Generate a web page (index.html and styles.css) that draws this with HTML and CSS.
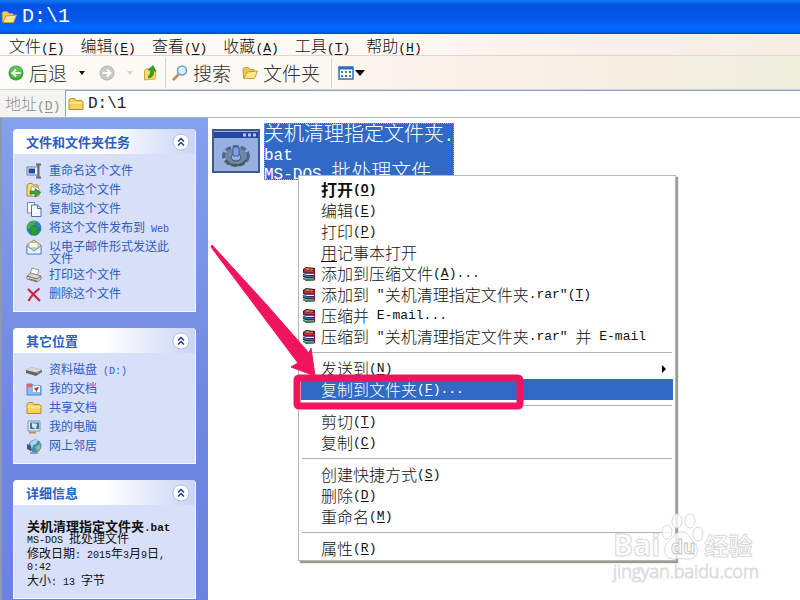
FILE: index.html
```html
<!DOCTYPE html>
<html lang="zh-CN">
<head>
    <meta charset="utf-8"/>
    <meta content="width=device-width, initial-scale=1.0" name="viewport"/>
    <title>D:\1</title>
    <link rel="stylesheet" href="styles.css">
</head>
<body>
    <svg class="symbols" aria-hidden="true">
        <symbol id="rar" viewBox="0 0 14 14">
            <path d="M1 2l3-2 9 1v12l-9 1-3-3z" fill="#222"/>
            <path d="M2 2l3-1 7 1-3 2z" fill="#e09030"/>
            <path d="M2 3l3 1.500h7.500" stroke="#d0284e" stroke-width="2" fill="none"/>
            <path d="M1 6.500l4 1h7.500M1 10.500l4 1.500h7.500" stroke="#eee" stroke-width="1" fill="none"/>
            <path d="M1 5.500l4 1h7.500" stroke="#7a3c90" stroke-width="1" fill="none"/>
            <path d="M1 8l4 1.500h7.500" stroke="#3a70c0" stroke-width="1.500" fill="none"/>
            <path d="M1 11.500l4 1.500h7.500" stroke="#2d8a48" stroke-width="1.500" fill="none"/>
            <path d="M8 1v3M12.500 2v11" stroke="#8a1038" stroke-width="1"/>
        </symbol>
        <symbol id="folder" viewBox="0 0 16 16">
            <path d="M1 13.500V4l1.500-1.500h4L8 4.500h5.500L15 6v7.500z" fill="#f5d45e" stroke="#b8892a"/>
            <path d="M1.500 7h13" stroke="#fff5b8"/>
        </symbol>
        <symbol id="folder-open" viewBox="0 0 16 16">
            <path d="M1.500 13L1 4l1.500-1.500h4L8 4.500h4V7" fill="#f0cb52" stroke="#c79a33"/>
            <path d="M2 13.500L5 7l10.500-1-3 7.500z" fill="#fde88e" stroke="#c79a33"/>
        </symbol>
        <symbol id="chevrons" viewBox="0 0 18 18">
            <circle cx="9" cy="9" r="8" fill="#fff" stroke="#b4bfe2"/>
            <path d="M6 8.500l3-3 3 3M6 12.500l3-3 3 3" fill="none" stroke="#1c3c80" stroke-width="1.500"/>
        </symbol>
    </svg>

    <div class="window">
        <header class="title-bar">
            <svg class="icon" viewBox="0 0 16 16"><use href="#folder-open"/></svg>
            <h1>D:\1</h1>
        </header>

        <nav class="menu-bar">
            <button type="button">文件<span class="en">(<u>F</u>)</span></button>
            <button type="button">编辑<span class="en">(<u>E</u>)</span></button>
            <button type="button">查看<span class="en">(<u>V</u>)</span></button>
            <button type="button">收藏<span class="en">(<u>A</u>)</span></button>
            <button type="button">工具<span class="en">(<u>T</u>)</span></button>
            <button type="button">帮助<span class="en">(<u>H</u>)</span></button>
        </nav>

        <div class="toolbar">
            <button type="button" class="back">
                <svg class="icon" viewBox="0 0 16 16"><circle cx="8" cy="8" r="7.500" fill="#38a536"/><circle cx="8" cy="7" r="6" fill="#5cc153"/><path d="M12.500 8H5M8 4.500L4.500 8 8 11.500" fill="none" stroke="#fff" stroke-width="2"/></svg>
                后退
            </button>
            <button type="button" class="drop" aria-label="后退历史"><svg viewBox="0 0 6 4"><path d="M0 0h6L3 4z" fill="#111"/></svg></button>
            <button type="button" aria-label="前进">
                <svg class="icon" viewBox="0 0 16 16"><circle cx="8" cy="8" r="7" fill="#c9c9c9" stroke="#b5b5b5"/><path d="M3.500 8H11M8 4.500L11.500 8 8 11.500" fill="none" stroke="#fff" stroke-width="2"/></svg>
            </button>
            <button type="button" class="drop" aria-label="前进历史"><svg viewBox="0 0 6 4"><path d="M0 0h6L3 4z" fill="#d9cfc4"/></svg></button>
            <button type="button" class="up" aria-label="向上">
                <svg class="icon" viewBox="0 0 16 16"><path d="M1.500 15V5.500L3 4h3l1 1.500h6L12 14z" fill="#f8dc6a" stroke="#d0a840"/><path d="M6 13c4-1 5-4 4.500-7H13L10 .5 5 5h2.500c.5 3-.5 5-2.500 7z" fill="#35a02e" stroke="#1c7a1c" stroke-width=".6"/></svg>
            </button>
            <span class="divider"></span>
            <button type="button" class="search">
                <svg class="icon" viewBox="0 0 16 16"><path d="M6.500 9.500L1 15" stroke="#c98352" stroke-width="2.500"/><circle cx="10" cy="5.500" r="4.500" fill="#d8effc" stroke="#6b9fd2" stroke-width="1.500"/><path d="M7.500 5a3 3 0 0 1 3-2.500" stroke="#fff" fill="none"/></svg>
                搜索
            </button>
            <button type="button" class="folders">
                <svg class="icon" viewBox="0 0 16 16"><use href="#folder-open"/></svg>
                文件夹
            </button>
            <span class="divider"></span>
            <button type="button" class="views" aria-label="查看方式">
                <svg class="icon" viewBox="0 0 16 14"><path d="M1 1h14v12H1z" fill="#fff" stroke="#2c70b8" stroke-width="1.500"/><path d="M1 1h14v2.500H1z" fill="#2472c8"/><path d="M3 6h2M3 10h2" stroke="#4a7ab8" stroke-width="2"/><path d="M7 6h2M11 10h2" stroke="#4aa050" stroke-width="2"/><path d="M11 6h2M7 10h2" stroke="#3f5f9c" stroke-width="2"/></svg>
                <svg class="caret" viewBox="0 0 10 6"><path d="M0 0h10L5 6z" fill="#000"/></svg>
            </button>
        </div>

        <div class="address-bar">
            <label for="address">地址<span class="en">(<u>D</u>)</span></label>
            <div class="address-box">
                <svg class="icon" viewBox="0 0 16 16"><use href="#folder"/></svg>
                <input type="text" id="address" value="D:\1"/>
            </div>
        </div>

        <div class="content">
            <aside class="sidebar">
                <section class="panel">
                    <div class="panel-head">
                        <h2>文件和文件夹任务</h2>
                        <button type="button" aria-label="折叠"><svg viewBox="0 0 18 18"><use href="#chevrons"/></svg></button>
                    </div>
                    <ul class="task-list">
                        <li><a href="#">
                            <svg class="icon" viewBox="0 0 16 16"><path d="M1 4h11v8H1z" fill="#f4f4f8" stroke="#777"/><path d="M2.500 5.500H9v5H2.500z" fill="#1c4cb0"/><path d="M10 1.500h5M12.500 2v12M10 14.500h5" stroke="#667" stroke-width="2"/></svg>
                            重命名这个文件</a></li>
                        <li><a href="#">
                            <svg class="icon" viewBox="0 0 16 16"><path d="M1 14V3l2-1.500h3L7.500 3H12v11z" fill="#f5dc78" stroke="#ae8d30"/><path d="M5 5h6l2 2v7H5z" fill="#fff" stroke="#999"/><path d="M4 9h5V6.500l6 4-6 4.500v-3H4z" fill="#3da52c" stroke="#1f7a18" stroke-width=".6"/></svg>
                            移动这个文件</a></li>
                        <li><a href="#">
                            <svg class="icon" viewBox="0 0 16 16"><path d="M1.500 1.500h7V12h-7z" fill="#fff" stroke="#6c88b8"/><path d="M5.500 4h6L15 7.500v8H5.500z" fill="#f6faff" stroke="#4d6ea8"/><path d="M11.500 4v3.500H15" fill="none" stroke="#4d6ea8"/></svg>
                            复制这个文件</a></li>
                        <li><a href="#">
                            <svg class="icon" viewBox="0 0 16 16"><circle cx="8" cy="8" r="7.500" fill="#2c83c4"/><path d="M2 4c3-4 6-3 8-3L8 5 5 6l1 3-3 1-2-3z" fill="#44b04c"/><path d="M8 5l6 5h-3v5H5v-5H2.500z" fill="#2f9e35" stroke="#176e20" stroke-width=".6"/></svg>
                            <span>将这个文件发布到<span class="en"> Web</span></span></a></li>
                        <li class="wrapped"><a href="#">
                            <svg class="icon" viewBox="0 0 16 16"><path d="M1 6l7-5 7 5v9H1z" fill="#c5daf5" stroke="#6c8fc4"/><path d="M3 3.500h9V9H3z" fill="#fffdf5" stroke="#d8a860"/><path d="M1 7l7 5 7-5v8H1z" fill="#e8f2ff" stroke="#6c8fc4"/></svg>
                            <span>以电子邮件形式发送此<br>文件</span></a></li>
                        <li><a href="#">
                            <svg class="icon" viewBox="0 0 16 16"><path d="M4 7l2-6 7 2-2 5z" fill="#fff" stroke="#999"/><path d="M1 9l4-3 10 3v3l-4 3L1 12z" fill="#dcd8cc" stroke="#88857c"/><path d="M3 12l8 2M1 9l10 3 4-3" fill="none" stroke="#6f6c66"/></svg>
                            打印这个文件</a></li>
                        <li><a href="#">
                            <svg class="icon" viewBox="0 0 16 16"><path d="M2 3l12 12M13.500 2.500C9 6 5 10 2.500 15" fill="none" stroke="#cf2142" stroke-width="2.200"/></svg>
                            删除这个文件</a></li>
                    </ul>
                </section>

                <section class="panel">
                    <div class="panel-head">
                        <h2>其它位置</h2>
                        <button type="button" aria-label="折叠"><svg viewBox="0 0 18 18"><use href="#chevrons"/></svg></button>
                    </div>
                    <ul class="task-list">
                        <li><a href="#">
                            <svg class="icon" viewBox="0 0 16 16"><path d="M0 8l6-3 10 3v2l-6 4L0 11z" fill="#666"/><path d="M0 8l6-3 10 3-6 2.500z" fill="#d9d9dc"/><circle cx="12" cy="10.500" r="1" fill="#5c5"/></svg>
                            <span>资料磁盘<span class="en"> (D:)</span></span></a></li>
                        <li><a href="#">
                            <svg class="icon" viewBox="0 0 16 16"><path d="M1 14V3h5l1.500 2H15v9z" fill="#88c0ec" stroke="#4a86c4"/><path d="M1 3h5v3H1z" fill="#e2646a"/><path d="M7 5h7v6H7z" fill="#fff"/><path d="M8 7l2.500 4L13 6z" fill="#c43648"/></svg>
                            我的文档</a></li>
                        <li><a href="#">
                            <svg class="icon" viewBox="0 0 16 16"><use href="#folder"/></svg>
                            共享文档</a></li>
                        <li><a href="#">
                            <svg class="icon" viewBox="0 0 16 16"><path d="M2 2h12v10H2z" fill="#dde4ea" stroke="#8797a8"/><path d="M4 3.500h9V10H4z" fill="#2c80b8"/><path d="M6 4l5 1-1 5-4-2z" fill="#cdeaf8"/><path d="M3 13.500h7" stroke="#c08a60" stroke-width="2"/></svg>
                            我的电脑</a></li>
                        <li><a href="#">
                            <svg class="icon" viewBox="0 0 16 16"><circle cx="9" cy="8" r="6.500" fill="#4a8ab0"/><path d="M4 5c2-3 6-4 8-3l-2 4-3 1-1 4z" fill="#a8dbe4"/><path d="M9 9l5-3c1 3 0 6-3 7z" fill="#7ac09a"/><path d="M1 6l4 2v5l-4-2z" fill="#3c5870"/><path d="M4 15h8" stroke="#789" stroke-width="1.500"/></svg>
                            网上邻居</a></li>
                    </ul>
                </section>

                <section class="panel">
                    <div class="panel-head">
                        <h2>详细信息</h2>
                        <button type="button" aria-label="折叠"><svg viewBox="0 0 18 18"><use href="#chevrons"/></svg></button>
                    </div>
                    <div class="details">
                        <h3>关机清理指定文件夹<span class="en">.bat</span></h3>
                        <p><span class="en">MS-DOS </span>批处理文件</p>
                        <p>修改日期<span class="en">: 2015</span>年<span class="en">3</span>月<span class="en">9</span>日<span class="en">,<br>0:42</span></p>
                        <p>大小<span class="en">: 13 </span>字节</p>
                    </div>
                </section>
            </aside>

            <main class="files">
                <div class="file">
                    <svg class="file-icon" viewBox="0 0 48 44">
                        <path d="M1 1h46v42H1z" fill="#96b0e2" stroke="#43578c" stroke-width="2"/>
                        <path d="M2 3h44v6H2z" fill="#2447a6"/>
                        <path d="M31 6h3M36 6h3M41 6h3" stroke="#b7c8ee" stroke-width="3"/>
                        <ellipse cx="24" cy="27" rx="11" ry="8" fill="none" stroke="#4d6690" stroke-width="6" stroke-dasharray="5 2"/>
                        <ellipse cx="24" cy="27" rx="9" ry="6" fill="#7891c0" stroke="#71869c" stroke-width="4"/>
                        <ellipse cx="24" cy="28" rx="5" ry="4" fill="#96b0e2" stroke="#34486f"/>
                        <path d="M21 18h6v9h-6z" fill="#7da0e6" stroke="#3e5fa8"/>
                        <path d="M14 31c4 7 16 7 20 0" fill="none" stroke="#3f5c50" stroke-width="2"/>
                    </svg>
                    <div class="file-label">关机清理指定文件夹<span class="en">.<br>bat<br>MS-DOS </span>批处理文件</div>
                </div>
            </main>
        </div>
    </div>

    <ul class="context-menu">
        <li><button type="button" class="default">打开<span class="en">(<u>O</u>)</span></button></li>
        <li><button type="button">编辑<span class="en">(<u>E</u>)</span></button></li>
        <li><button type="button">打印<span class="en">(<u>P</u>)</span></button></li>
        <li><button type="button"><u>用</u>记事本打开</button></li>
        <li><button type="button"><svg class="rar"><use href="#rar"/></svg>添加到压缩文件<span class="en">(<u>A</u>)...</span></button></li>
        <li><button type="button"><svg class="rar"><use href="#rar"/></svg>添加到<span class="en"> "</span>关机清理指定文件夹<span class="en">.rar"(<u>T</u>)</span></button></li>
        <li><button type="button"><svg class="rar"><use href="#rar"/></svg>压缩并<span class="en"> E-mail...</span></button></li>
        <li><button type="button"><svg class="rar"><use href="#rar"/></svg>压缩到<span class="en"> "</span>关机清理指定文件夹<span class="en">.rar" </span>并<span class="en"> E-mail</span></button></li>
        <li class="separator"></li>
        <li><button type="button">发送到<span class="en">(<u>N</u>)</span><svg class="submenu" viewBox="0 0 4 8"><path d="M0 0v8l4-4z" fill="#000"/></svg></button></li>
        <li><button type="button" class="selected">复制到文件夹<span class="en">(<u>F</u>)...</span></button></li>
        <li class="separator"></li>
        <li><button type="button">剪切<span class="en">(<u>T</u>)</span></button></li>
        <li><button type="button">复制<span class="en">(<u>C</u>)</span></button></li>
        <li class="separator"></li>
        <li><button type="button">创建快捷方式<span class="en">(<u>S</u>)</span></button></li>
        <li><button type="button">删除<span class="en">(<u>D</u>)</span></button></li>
        <li><button type="button">重命名<span class="en">(<u>M</u>)</span></button></li>
        <li class="separator"></li>
        <li><button type="button">属性<span class="en">(<u>R</u>)</span></button></li>
    </ul>

    <!-- arrow and frame that point at the selected entry -->
    <svg class="callout" viewBox="0 0 320 170" aria-hidden="true">
        <path d="M2 0L56 59l43 49 2-5 4 28-24-9 7-4-39-52L1 2z" fill="#f0145f" stroke="#f0145f" stroke-linejoin="round"/>
        <rect x="87" y="133" width="223" height="28" rx="2" fill="none" stroke="#f0145f" stroke-width="7"/>
    </svg>

    <div class="watermark">
        <div class="watermark-brand">
            <span>Bai</span>
            <svg class="paw" viewBox="0 0 44 48">
                <g fill="#fff" fill-opacity=".8" stroke="#d9d9d9">
                    <ellipse cx="7" cy="20" rx="5" ry="7"/>
                    <ellipse cx="17" cy="9" rx="5" ry="7"/>
                    <ellipse cx="30" cy="9" rx="5" ry="7"/>
                    <ellipse cx="38" cy="22" rx="5" ry="7"/>
                    <path d="M22 20c6 0 8 6 12 10 6 6 4 17-5 17-4 0-10-1-14 0-10 1-14-10-7-17 5-4 7-10 14-10z"/>
                </g>
                <text x="11" y="42">du</text>
            </svg>
            <span class="watermark-cn">经验</span>
        </div>
        <div class="watermark-url">jingyan.baidu.com</div>
    </div>
</body>
</html>
```

FILE: styles.css
```css
* {
    box-sizing: border-box;
}

body {
    margin: 0;
    height: 100vh;
    overflow: hidden;
    position: relative;
    background-color: #ffffff;
    color: #111111;
    font-family: "Noto Sans CJK SC", sans-serif;
    font-weight: 300;
    font-size: 16px;
}

h1, h2, h3, p, ul {
    margin: 0;
    padding: 0;
}

ul {
    list-style: none;
}

button {
    border: none;
    background: none;
    padding: 0;
    margin: 0;
    color: inherit;
    font: inherit;
    white-space: nowrap;
}

svg {
    display: block;
    flex: none;
}

u {
    text-underline-offset: 2px;
}

.symbols {
    position: absolute;
    width: 0;
    height: 0;
}

.icon {
    width: 16px;
    height: 16px;
}

/* latin text is set half as wide as the chinese characters */
.en {
    font-family: "Liberation Mono", monospace;
    font-size: 13px;
    line-height: 0;
    white-space: pre;
}

.window {
    display: flex;
    flex-direction: column;
    height: 100%;
}

.title-bar {
    display: flex;
    align-items: center;
    gap: 5px;
    height: 34px;
    padding-left: 1px;
    background: linear-gradient(#1478f4 0, #0353e2 5px, #0456ea 18px, #0268fe 27px, #0262fa 31px, #0a46c4 34px);
}

.title-bar h1 {
    color: #ffffff;
    font-family: "Liberation Mono", monospace;
    font-size: 20px;
    font-weight: normal;
    line-height: 24px;
}

.menu-bar {
    display: flex;
    gap: 16px;
    height: 22px;
    padding-left: 9px;
    background: linear-gradient(90deg, #fdfdfb, #fdf8f3 50%, #fbeeea 75%, #f6efe4);
    border-bottom: 1px solid #dcd6d0;
}

.menu-bar button {
    line-height: 20px;
}

.toolbar {
    display: flex;
    align-items: center;
    height: 34px;
    padding-left: 8px;
    background: linear-gradient(90deg, #fdfcf8, #fdf9f3 35%, #fbf0e8 60%, #efeedd);
    border-bottom: 1px solid #d0d4da;
    color: #333333;
    font-size: 19px;
    line-height: 28px;
}

.toolbar button {
    display: flex;
    align-items: center;
    gap: 5px;
}

.toolbar .drop {
    margin: 0 14px 0 12px;
}

.drop svg {
    width: 6px;
    height: 4px;
}

.toolbar .drop + .up {
    margin-left: -4px;
}

.divider {
    width: 1px;
    height: 30px;
    margin: 0 6px;
    background-color: #d5d3cc;
}

.toolbar .folders {
    margin-left: 11px;
}

.toolbar .folders + .divider {
    margin-left: 11px;
}

.toolbar .views {
    gap: 1px;
}

.caret {
    width: 10px;
    height: 6px;
}

.address-bar {
    display: flex;
    height: 28px;
    background-color: #f5f4f0;
    border-bottom: 1px solid #a9b8d4;
}

.address-bar label {
    width: 65px;
    padding-left: 5px;
    color: #909090;
    line-height: 27px;
}

.address-box {
    display: flex;
    flex: 1;
    align-items: center;
    gap: 4px;
    padding-left: 2px;
    background-color: #ffffff;
    border: 1px solid #8fa3c6;
    border-right: none;
    border-bottom: none;
}

.address-box input {
    flex: 1;
    min-width: 0;
    padding: 0;
    border: none;
    outline: none;
    background: none;
    color: #222222;
    font-family: "Liberation Mono", monospace;
    font-size: 16px;
}

.content {
    display: flex;
    flex: 1;
    min-height: 0;
}

.sidebar {
    display: flex;
    flex-direction: column;
    gap: 16px;
    width: 208px;
    padding: 11px 12px 0 11px;
    overflow: hidden;
    border-left: 2px solid #8c98b8;
    background: linear-gradient(#83a1ec, #7088e2 60%, #6c82e0);
}

.panel {
    flex: none;
    border: 1px solid #f4f6fe;
    border-top: none;
    border-radius: 4px 4px 0 0;
    background-color: #d8dff8;
}

.panel-head {
    display: flex;
    align-items: center;
    justify-content: space-between;
    height: 25px;
    padding: 0 5px 0 12px;
    border-radius: 4px 4px 0 0;
    background: linear-gradient(90deg, #ffffff 50%, #c9d5f6);
}

.panel-head h2 {
    color: #2a5fc4;
    font-size: 13px;
    font-weight: bold;
    line-height: 20px;
}

.panel-head svg {
    width: 18px;
    height: 18px;
}

.task-list {
    display: flex;
    flex-direction: column;
    gap: 7px;
    padding: 10px 0 12px 12px;
}

.task-list a {
    display: flex;
    gap: 7px;
    color: #2c5ec4;
    font-size: 12px;
    font-weight: normal;
    line-height: 12px;
    text-decoration: none;
}

.task-list .wrapped {
    margin-bottom: -3px;
}

.task-list .icon {
    margin: -1px 0 -3px;
}

.task-list .en {
    font-size: 10px;
}

.details {
    display: flex;
    flex-direction: column;
    gap: 3px;
    padding: 14px 0 12px 13px;
    color: #111111;
    font-size: 12px;
    font-weight: normal;
    line-height: 12px;
}

.details .en {
    font-size: 10px;
}

.details h3 {
    margin-bottom: -3px;
    font-size: 13px;
    line-height: 13px;
}

.details h3 .en {
    font-size: 11px;
}

.files {
    flex: 1;
    min-width: 0;
    padding: 5px 4px;
    background-color: #ffffff;
}

.file {
    display: flex;
    align-items: flex-start;
    gap: 4px;
}

.file-icon {
    width: 48px;
    height: 44px;
    margin-top: 6px;
}

.file-label {
    background-color: #316ac5;
    color: #ffffff;
    outline: 1px dotted #c8a060;
    outline-offset: -1px;
    font-size: 20px;
    line-height: 19px;
    white-space: nowrap;
}

.file-label .en {
    font-size: 16px;
}

.context-menu {
    position: absolute;
    top: 175px;
    left: 298px;
    width: 378px;
    padding: 3px 2px 1px;
    border: 1px solid #b8b8b0;
    background-color: #ffffff;
    box-shadow: 2px 2px 1px #989c94;
}

.context-menu button {
    display: flex;
    align-items: center;
    position: relative;
    width: 100%;
    height: 21px;
    padding-left: 20px;
    line-height: 21px;
    text-align: left;
}

.context-menu .en {
    line-height: 21px;
}

.context-menu .default {
    font-weight: bold;
}

.context-menu .selected {
    background-color: #316ac5;
    color: #ffffff;
}

.context-menu .rar {
    width: 14px;
    height: 14px;
    margin: 0 5px 0 -19px;
}

.context-menu .submenu {
    width: 4px;
    height: 8px;
    margin: 0 7px 0 auto;
}

.separator {
    height: 1px;
    margin: 5px 1px;
    background-color: #b4b4ac;
}

.callout {
    position: absolute;
    top: 245px;
    left: 210px;
    width: 320px;
    height: 170px;
    pointer-events: none;
}

.watermark {
    position: absolute;
    top: 514px;
    left: 613px;
    color: #ffffff;
    font-family: "Open Sans", sans-serif;
    pointer-events: none;
    -webkit-text-stroke: 1px #d9d9d9;
}

.watermark-brand {
    display: flex;
    align-items: flex-end;
    height: 46px;
    font-size: 30px;
    font-weight: bold;
    line-height: 30px;
}

.paw {
    width: 44px;
    height: 48px;
}

.paw text {
    fill: #ffffff;
    stroke: #c4c4c4;
    font-size: 19px;
}

.watermark-cn {
    font-family: "Noto Sans CJK SC", sans-serif;
    font-size: 24px;
}

.watermark-url {
    font-size: 18px;
    line-height: 22px;
    -webkit-text-stroke: 1px #dddddd;
}
```
